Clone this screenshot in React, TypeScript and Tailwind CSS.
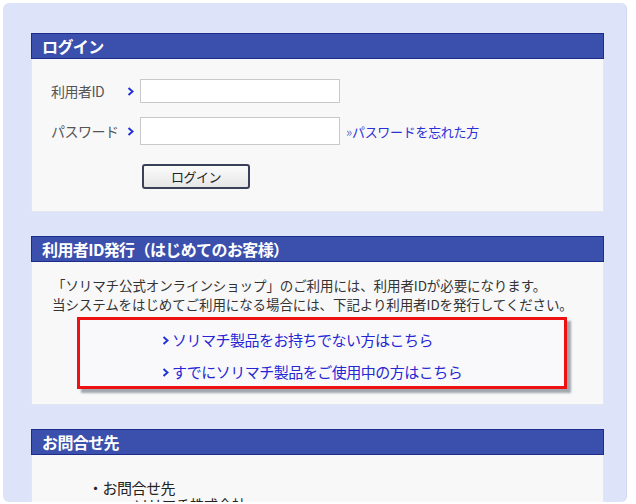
import React from "react";

const font = { fontFamily: '"Noto Sans CJK JP", "Noto Sans", sans-serif' };

function Chevron({ className = "" }: { className?: string }) {
  return (
    <svg width="7" height="9" viewBox="0 0 7 9" className={className}>
      <path d="M1.5 1 L5.5 4.5 L1.5 8" fill="none" stroke="#2433d8" strokeWidth="2" />
    </svg>
  );
}

function Header({ title }: { title: string }) {
  return (
    <div className="h-[26px] bg-[#3b4fad] border border-[#1d2c88] flex items-center pl-[10px]">
      <span className="text-white font-bold text-[16px] leading-none tracking-[-0.6px]">{title}</span>
    </div>
  );
}

export default function App() {
  return (
    <div className="w-[636px] h-[504px] bg-white overflow-hidden pt-[3px] pl-[3px] pr-[9px]" style={font}>
      <div className="h-[499px] bg-[#dde3f9] rounded-[6px] border-r border-[#cfd6ee] pl-[28px] pr-[22px] pt-[30px] flex flex-col gap-[24px] overflow-hidden">
        {/* Login */}
        <div className="flex flex-col">
          <Header title="ログイン" />
          <div className="h-[153px] bg-[#f8f8f9] border border-t-0 border-[#e4e6ee] pt-[20px] pl-[19px]">
            <div className="flex items-center h-[24px]">
              <span className="w-[76px] text-[14px] text-[#555] leading-none tracking-[-0.5px]">利用者ID</span>
              <Chevron className="mr-[6px]" />
              <div className="w-[200px] h-[24px] bg-white border border-[#c9c9c9]" />
            </div>
            <div className="flex items-center h-[28px] mt-[14px]">
              <span className="w-[76px] text-[14px] text-[#555] leading-none tracking-[-0.5px]">パスワード</span>
              <Chevron className="mr-[6px]" />
              <div className="w-[200px] h-[28px] bg-white border border-[#c9c9c9]" />
              <span className="ml-[6px] text-[13px] text-[#2a2fd6] leading-none tracking-[-0.3px]">
                <span className="text-[#6b78c8]">»</span>パスワードを忘れた方
              </span>
            </div>
            <div className="pl-[91px] mt-[19px]">
              <div className="w-[108px] h-[25px] rounded-[3px] border-2 border-[#3a4058] bg-gradient-to-b from-[#fbfbfb] to-[#e6e6e6] flex items-center justify-center">
                <span className="text-[13px] text-[#222] leading-none tracking-[-0.5px]">ログイン</span>
              </div>
            </div>
          </div>
        </div>

        {/* ID issue */}
        <div className="flex flex-col">
          <Header title="利用者ID発行（はじめてのお客様）" />
          <div className="h-[143px] bg-[#f8f8f9] border border-t-0 border-[#e4e6ee] pt-[14px] pl-[20px]">
            <p className="text-[13.5px] text-[#333] leading-[19px] tracking-[-0.1px] whitespace-nowrap">
              「ソリマチ公式オンラインショップ」のご利用には、利用者IDが必要になります。
              <br />
              当システムをはじめてご利用になる場合には、下記より利用者IDを発行してください。
            </p>
            <div className="ml-[25px] mt-[3px] w-[490px] h-[72px] border-[3px] border-[#ee1111] bg-[#f9f9fb] shadow-[4px_4px_2px_rgba(90,100,110,0.55)] flex flex-col pl-[82px] pt-[10px] gap-[12px]">
              <div className="flex items-center gap-[3px] text-[15px] text-[#2626d4] leading-[20px] tracking-[-0.5px]">
                <Chevron />
                ソリマチ製品をお持ちでない方はこちら
              </div>
              <div className="flex items-center gap-[3px] text-[15px] text-[#2626d4] leading-[20px] tracking-[-0.5px]">
                <Chevron />
                すでにソリマチ製品をご使用中の方はこちら
              </div>
            </div>
          </div>
        </div>

        {/* Contact */}
        <div className="flex flex-col">
          <Header title="お問合せ先" />
          <div className="h-[120px] bg-[#f8f8f9] border border-t-0 border-[#e4e6ee] pt-[24px] pl-[56px]">
            <div className="text-[15px] text-[#222] leading-[17px] tracking-[-0.5px]">・お問合せ先</div>
            <div className="text-[14px] text-[#222] leading-[16px] pl-[46px]">ソリマチ株式会社</div>
          </div>
        </div>
      </div>
    </div>
  );
}
